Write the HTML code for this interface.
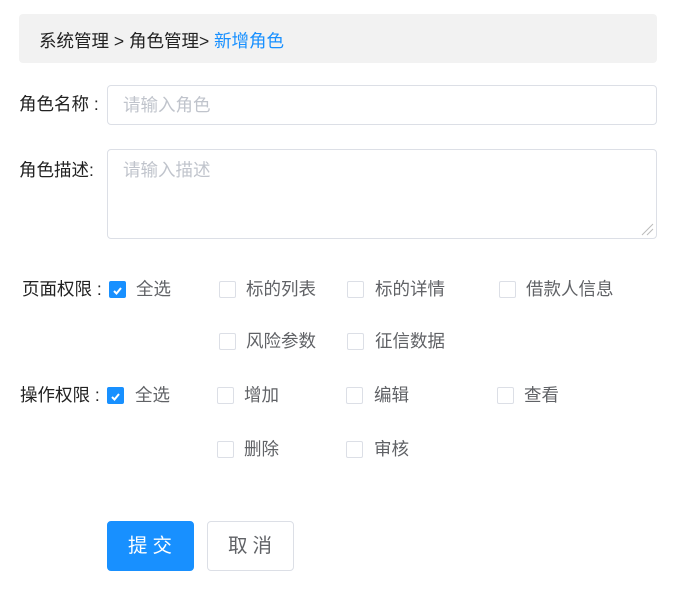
<!DOCTYPE html>
<html><head><meta charset="utf-8"><style>
*{margin:0;padding:0;box-sizing:border-box}
body{width:675px;height:589px;background:#fff;font-family:"Liberation Sans","Noto Sans CJK SC",sans-serif;font-size:17.5px;position:relative;overflow:hidden;color:#222}
.a{position:absolute;white-space:nowrap;line-height:20px}
.bc{position:absolute;left:19px;top:14px;width:638px;height:49px;background:#f2f2f2;border-radius:4px;padding:17px 0 0 20px;line-height:20px}
.bc span{color:#1890ff}
.in{position:absolute;left:107px;width:550px;border:1px solid #dcdfe6;border-radius:4px;color:#c0c4cc;padding-left:15px;line-height:20px}
.cb{position:absolute;width:17px;height:17px;border:1px solid #dcdfe6;border-radius:2px;background:#fff;margin-top:1px}
.cb.on{background:#1890ff;border-color:#1890ff}
.t{color:#606266}
.btn{position:absolute;top:521px;height:50px;border-radius:4px;font-size:19.5px;line-height:48px;text-align:center;letter-spacing:5px;padding-left:4px}
</style></head><body>
<div class="bc">系统管理 &gt; 角色管理&gt; <span>新增角色</span></div>
<div class="a" style="left:19px;top:94px">角色名称 :</div>
<div class="in" style="top:85px;height:40px;padding-top:9px">请输入角色</div>
<div class="a" style="left:19px;top:160px">角色描述:</div>
<div class="in" style="top:149px;height:90px;padding-top:10px">请输入描述
<svg style="position:absolute;right:2px;bottom:2px" width="14" height="14"><path d="M2 13L13 2M7 13L13 7" stroke="#bbb" stroke-width="1"/></svg></div>

<div class="a" style="left:22px;top:279px">页面权限 :</div>
<div class="cb on" style="left:109px;top:280px"><svg width="15" height="15"><path d="M4 8L6.5 10.5L11 5" stroke="#fff" stroke-width="2" fill="none"/></svg></div>
<div class="a t" style="left:136px;top:279px">全选</div>
<div class="cb" style="left:219px;top:280px"></div><div class="a t" style="left:246px;top:279px">标的列表</div>
<div class="cb" style="left:347px;top:280px"></div><div class="a t" style="left:375px;top:279px">标的详情</div>
<div class="cb" style="left:499px;top:280px"></div><div class="a t" style="left:526px;top:279px">借款人信息</div>
<div class="cb" style="left:219px;top:332px"></div><div class="a t" style="left:246px;top:331px">风险参数</div>
<div class="cb" style="left:347px;top:332px"></div><div class="a t" style="left:375px;top:331px">征信数据</div>

<div class="a" style="left:20px;top:385px">操作权限 :</div>
<div class="cb on" style="left:107px;top:386px"><svg width="15" height="15"><path d="M4 8L6.5 10.5L11 5" stroke="#fff" stroke-width="2" fill="none"/></svg></div>
<div class="a t" style="left:135px;top:385px">全选</div>
<div class="cb" style="left:217px;top:386px"></div><div class="a t" style="left:244px;top:385px">增加</div>
<div class="cb" style="left:346px;top:386px"></div><div class="a t" style="left:374px;top:385px">编辑</div>
<div class="cb" style="left:497px;top:386px"></div><div class="a t" style="left:524px;top:385px">查看</div>
<div class="cb" style="left:217px;top:440px"></div><div class="a t" style="left:244px;top:439px">删除</div>
<div class="cb" style="left:346px;top:440px"></div><div class="a t" style="left:374px;top:439px">审核</div>

<div class="btn" style="left:107px;width:87px;background:#1890ff;color:#fff;border:1px solid #1890ff">提交</div>
<div class="btn" style="left:207px;width:87px;background:#fff;color:#606266;border:1px solid #dcdfe6">取消</div>
</body></html>
